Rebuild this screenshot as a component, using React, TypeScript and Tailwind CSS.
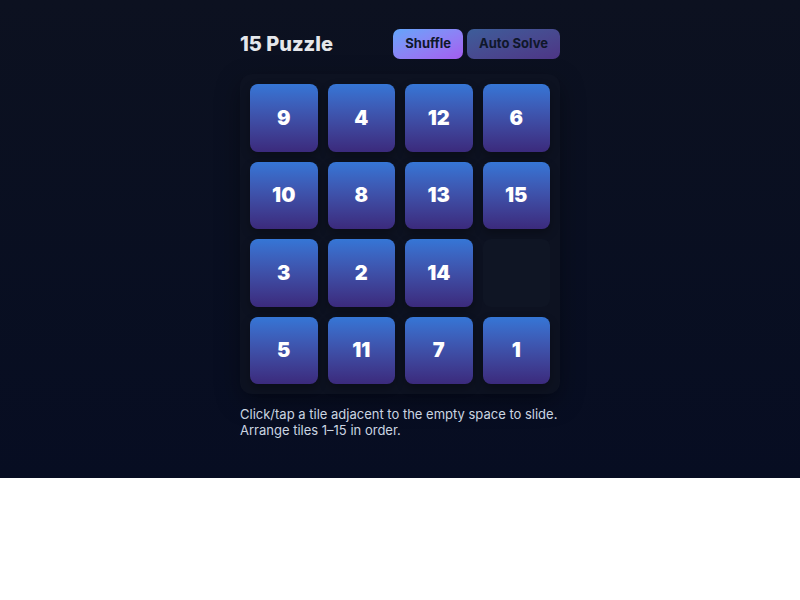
import React from "react";

const tiles: (number | null)[] = [9, 4, 12, 6, 10, 8, 13, 15, 3, 2, 14, null, 5, 11, 7, 1];

export default function App() {
  return (
    <div
      className="flex flex-col items-center bg-gradient-to-b from-[#0c1120] to-[#070d22] pt-[29px] pb-[40px]"
      style={{ fontFamily: "Inter, 'Noto Sans', sans-serif" }}
    >
      <div className="w-[320px]">
        <div className="flex items-center justify-between h-[30px]">
          <h1 className="text-[20px] font-extrabold text-[#e5e7eb]">15 Puzzle</h1>
          <div className="flex gap-[4px]">
            <button className="h-[30px] px-[12px] rounded-[7px] bg-gradient-to-br from-[#60a5fa] to-[#a35bf0] text-[13px] font-bold text-[#0f172a]">
              Shuffle
            </button>
            <button className="h-[30px] px-[12px] rounded-[7px] bg-gradient-to-br from-[#3c5d9a] to-[#4d3585] text-[13px] font-bold text-[#0f172a]">
              Auto Solve
            </button>
          </div>
        </div>

        <div className="mt-[15px] p-[10px] rounded-[12px] bg-[#0d1221] shadow-[0_8px_24px_rgba(0,0,0,0.35)] grid grid-cols-4 gap-[10px]">
          {tiles.map((t, i) =>
            t === null ? (
              <div key={i} className="h-[67.5px] rounded-[8px] bg-[#0f1524]" />
            ) : (
              <div
                key={i}
                className="h-[67.5px] rounded-[8px] bg-gradient-to-b from-[#3576d6] to-[#3b2a7c] flex items-center justify-center text-[20px] font-black text-white shadow-[0_4px_10px_rgba(0,0,0,0.3)]"
              >
                {t}
              </div>
            )
          )}
        </div>

        <p className="mt-[12px] text-[13px] leading-[16px] text-[#cbd5e1] whitespace-nowrap">
          Click/tap a tile adjacent to the empty space to slide.
          <br />
          Arrange tiles 1–15 in order.
        </p>
      </div>
    </div>
  );
}
